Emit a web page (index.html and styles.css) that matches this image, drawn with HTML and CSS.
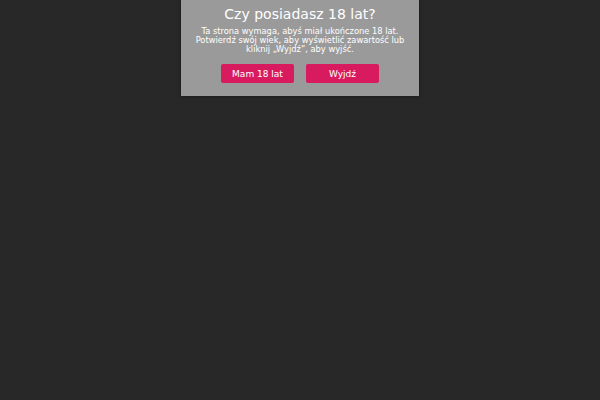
FILE: index.html
```html
<!DOCTYPE html>
<html lang="pl">
<head>
    <meta charset="UTF-8">
    <meta name="viewport" content="width=device-width, initial-scale=1.0">
    <title>Weryfikacja wieku</title>
    <link rel="stylesheet" href="styles.css">
</head>
<body>
    <div class="age-gate">
        <h1>Czy posiadasz 18 lat?</h1>
        <p>Ta strona wymaga, abyś miał ukończone 18 lat. Potwierdź swój wiek, aby wyświetlić zawartość lub kliknij „Wyjdź”, aby wyjść.</p>
        <div class="buttons">
            <button type="button" class="btn">Mam 18 lat</button>
            <button type="button" class="btn">Wyjdź</button>
        </div>
    </div>
</body>
</html>
```

FILE: styles.css
```css
html, body {
    height: 100%;
}

body {
    font-family: "DejaVu Sans", sans-serif;
    background-color: #282828;
    margin: 0;
    padding: 0;
}

.age-gate {
    width: 238px;
    margin: 0 auto;
    padding: 6px 10px 13px;
    box-sizing: border-box;
    background-color: #9b9a9a;
    color: #fff;
    text-align: center;
    box-shadow: 0 0 4px rgba(0, 0, 0, 0.4);
}

h1 {
    font-size: 14px;
    line-height: 16px;
    font-weight: normal;
    margin: 0 0 5px;
}

p {
    font-size: 8.3px;
    line-height: 9px;
    margin: 0 0 10px;
}

.buttons {
    display: flex;
    justify-content: center;
    gap: 12px;
}

.btn {
    width: 73px;
    height: 19px;
    padding: 0;
    font-family: inherit;
    font-size: 9px;
    color: #fff;
    background-color: #d81b5f;
    border: none;
    border-radius: 2px;
    cursor: pointer;
}
```
